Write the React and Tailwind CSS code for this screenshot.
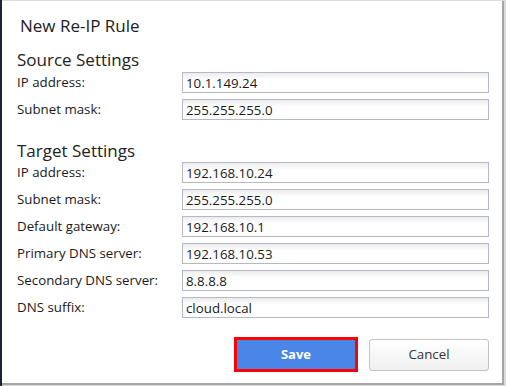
import React from "react";

const sourceRows = [
    { label: "IP address:", value: "10.1.149.24" },
    { label: "Subnet mask:", value: "255.255.255.0" },
];

const targetRows = [
    { label: "IP address:", value: "192.168.10.24" },
    { label: "Subnet mask:", value: "255.255.255.0" },
    { label: "Default gateway:", value: "192.168.10.1" },
    { label: "Primary DNS server:", value: "192.168.10.53" },
    { label: "Secondary DNS server:", value: "8.8.8.8" },
    { label: "DNS suffix:", value: "cloud.local" },
];

function FieldRow({ label, value }) {
    return (
        <div className="flex items-center h-[21px] mb-[6px]">
            <label className="w-[165px] shrink-0 text-[13.3px] text-[#1a1a1a]">{label}</label>
            <input
                readOnly
                value={value}
                className="w-[307px] h-[21px] border border-[#b5b8c8] bg-[linear-gradient(#ececec,#ffffff_7px)] px-[3px] text-[13.3px] text-[#1a1a1a] outline-none"
            />
        </div>
    );
}

export default function App() {
    return (
        <div
            className="flex w-[506px] h-[386px] bg-[#dcdcdc] overflow-hidden"
            style={{ fontFamily: '"Open Sans", "Liberation Sans", sans-serif' }}
        >
            <div className="w-[2px] h-full bg-[#1c2233] shrink-0"></div>
            <div className="mt-[1px] w-[502px] h-[384px] bg-white border-r-2 border-b-2 border-[#a4a4a4] flex flex-col pl-[15px]">
                <h2 className="mt-[15px] ml-[3px] h-[20px] leading-[20px] text-[17px] text-[#222]">New Re-IP Rule</h2>

                <h3 className="mt-[13px] h-[22px] leading-[22px] text-[17px] text-[#222]">Source Settings</h3>
                <div className="mt-[1px]">
                    {sourceRows.map((row) => (
                        <FieldRow key={row.label} label={row.label} value={row.value} />
                    ))}
                </div>

                <h3 className="mt-[14px] h-[22px] leading-[22px] text-[17px] text-[#222]">Target Settings</h3>
                <div>
                    {targetRows.map((row, i) => (
                        <FieldRow key={i} label={row.label} value={row.value} />
                    ))}
                </div>

                <div className="flex items-center mt-[13px] pl-[217px] gap-[11px]">
                    <button className="w-[124px] h-[35px] border-[3px] border-[#ff0000] bg-[#4a86e8] text-white font-bold text-[13px]">
                        Save
                    </button>
                    <button className="w-[120px] h-[32px] rounded-[3px] border border-[#c3c3c3] bg-[linear-gradient(#ffffff,#f0f0f0)] text-[13.3px] text-[#333]">
                        Cancel
                    </button>
                </div>
            </div>
        </div>
    );
}
